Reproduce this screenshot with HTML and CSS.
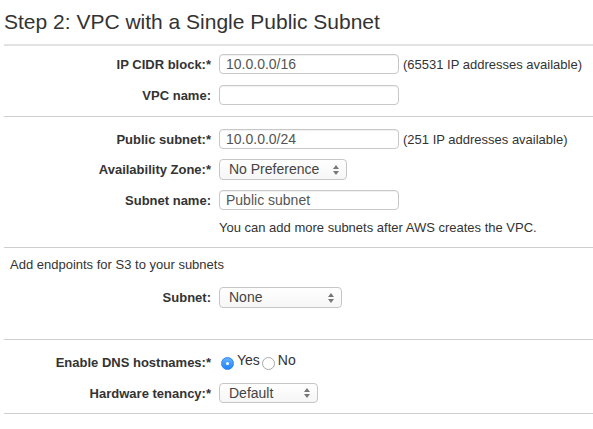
FILE: index.html
```html
<!DOCTYPE html>
<html>
<head>
<meta charset="utf-8">
<link rel="stylesheet" href="styles.css">
</head>
<body>
<div class="page">
  <h1 class="title">Step 2: VPC with a Single Public Subnet</h1>

  <section class="sec sec-vpc">
    <div class="row">
      <label class="lbl">IP CIDR block:*</label>
      <div class="input">10.0.0.0/16</div>
      <span class="help">(65531 IP addresses available)</span>
    </div>
    <div class="row">
      <label class="lbl">VPC name:</label>
      <div class="input"></div>
    </div>
  </section>

  <section class="sec sec-subnet">
    <div class="row">
      <label class="lbl">Public subnet:*</label>
      <div class="input">10.0.0.0/24</div>
      <span class="help">(251 IP addresses available)</span>
    </div>
    <div class="row row-sel">
      <label class="lbl">Availability Zone:*</label>
      <div class="select sel-az">No Preference<span class="arrows"><i class="up"></i><i class="down"></i></span></div>
    </div>
    <div class="row">
      <label class="lbl">Subnet name:</label>
      <div class="input">Public subnet</div>
    </div>
    <div class="note">You can add more subnets after AWS creates the VPC.</div>
  </section>

  <section class="sec sec-s3">
    <div class="intro">Add endpoints for S3 to your subnets</div>
    <div class="row row-sel">
      <label class="lbl">Subnet:</label>
      <div class="select sel-sub">None<span class="arrows"><i class="up"></i><i class="down"></i></span></div>
    </div>
  </section>

  <section class="sec sec-dns">
    <div class="row">
      <label class="lbl">Enable DNS hostnames:*</label>
      <div class="radios">
        <span class="radio on"></span><span class="rtext">Yes</span>
        <span class="radio"></span><span class="rtext">No</span>
      </div>
    </div>
    <div class="row">
      <label class="lbl">Hardware tenancy:*</label>
      <div class="select sel-hw">Default<span class="arrows"><i class="up"></i><i class="down"></i></span></div>
    </div>
  </section>
</div>
</body>
</html>
```

FILE: styles.css
```css
html, body {
  margin: 0;
  padding: 0;
  background: #fff;
}

body {
  font-family: "Liberation Sans", Arial, Helvetica, sans-serif;
  color: #333;
  font-size: 13px;
}

.page {
  width: 593px;
}

.title {
  margin: 0 0 0 4px;
  padding: 10px 0 10px 0;
  font-size: 21px;
  line-height: 24px;
  font-weight: normal;
  color: #333;
  border-bottom: 2px solid #e2e2e2;
}

.sec {
  margin-left: 4px;
  border-bottom: 1px solid #cfcfcf;
  display: flex;
  flex-direction: column;
}

.sec-vpc {
  padding: 8px 0 11px;
  gap: 11px;
}

.sec-subnet {
  padding: 12px 0 11px;
  gap: 10px;
}

.sec-s3 {
  padding: 9px 0 31px;
  gap: 14px;
}

.sec-dns {
  padding: 12px 0 10px;
  gap: 11px;
}

.row {
  display: flex;
  align-items: center;
  height: 20px;
}

.row-sel {
  height: 21px;
}

.lbl {
  width: 207px;
  flex: none;
  text-align: right;
  font-weight: bold;
  font-size: 13px;
  margin-right: 8px;
  color: #333;
}

.input {
  box-sizing: border-box;
  width: 180px;
  height: 20px;
  border: 1px solid #c8c8c8;
  border-radius: 4px;
  background: #fff;
  box-shadow: inset 0 1px 1px rgba(0,0,0,0.06);
  font-size: 14px;
  line-height: 18px;
  color: #555;
  padding: 0 6px;
  white-space: nowrap;
}

.help {
  margin-left: 4px;
  font-size: 13px;
  color: #333;
}

.note {
  margin-left: 215px;
  font-size: 13px;
  line-height: 16px;
  color: #333;
  margin-top: 0;
}

.intro {
  margin-left: 6px;
  font-size: 13px;
  line-height: 16px;
  color: #333;
}

.select {
  position: relative;
  box-sizing: border-box;
  height: 21px;
  border: 1px solid #c6c6c6;
  border-radius: 4px;
  background: linear-gradient(#ffffff, #f6f6f6);
  font-size: 14px;
  line-height: 19px;
  color: #444;
  padding-left: 9px;
  white-space: nowrap;
}

.sel-az { width: 128px; }
.sel-sub { width: 123px; }
.sel-hw { width: 99px; height: 20px; line-height: 18px; }

.arrows {
  position: absolute;
  right: 7px;
  top: 50%;
  transform: translateY(-50%);
  display: flex;
  flex-direction: column;
  gap: 2px;
}

.arrows i {
  display: block;
  width: 0;
  height: 0;
  border-left: 3px solid transparent;
  border-right: 3px solid transparent;
}

.arrows .up {
  border-bottom: 4px solid #777;
}

.arrows .down {
  border-top: 4px solid #777;
}

.radios {
  display: flex;
  align-items: flex-start;
  align-self: flex-start;
  height: 20px;
  margin-left: 2px;
}

.radio {
  box-sizing: border-box;
  width: 13px;
  height: 13px;
  border-radius: 50%;
  border: 1px solid #a9a9a9;
  background: #fff;
  margin-top: 5px;
  position: relative;
  flex: none;
}

.radio.on {
  border-color: #2b86f1;
  background: linear-gradient(#63b0ff, #1f84f7);
}

.radio.on::after {
  content: "";
  position: absolute;
  left: 4px;
  top: 4px;
  width: 3px;
  height: 3px;
  border-radius: 50%;
  background: #fff;
}

.rtext {
  font-size: 14px;
  line-height: 16px;
  color: #333;
  margin-left: 3px;
  margin-right: 2px;
}
```
